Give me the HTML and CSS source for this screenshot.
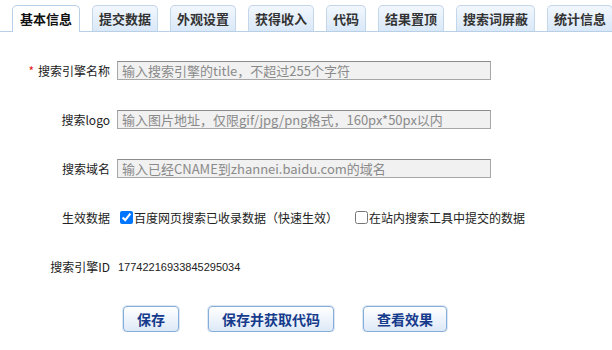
FILE: index.html
```html
<!DOCTYPE html>
<html lang="zh-CN">
<head>
    <meta charset="UTF-8">
    <title>站内搜索设置</title>
    <link rel="stylesheet" href="styles.css">
</head>
<body>

<ul class="tabs">
    <li class="tab active">基本信息</li>
    <li class="tab">提交数据</li>
    <li class="tab">外观设置</li>
    <li class="tab">获得收入</li>
    <li class="tab">代码</li>
    <li class="tab">结果置顶</li>
    <li class="tab">搜索词屏蔽</li>
    <li class="tab">统计信息</li>
</ul>

<form class="setting-form">
    <div class="row">
        <label class="row-label"><span class="required">*</span>搜索引擎名称</label>
        <input class="text-input" type="text" placeholder="输入搜索引擎的title，不超过255个字符">
    </div>
    <div class="row">
        <label class="row-label">搜索logo</label>
        <input class="text-input" type="text" placeholder="输入图片地址，仅限gif/jpg/png格式，160px*50px以内">
    </div>
    <div class="row">
        <label class="row-label">搜索域名</label>
        <input class="text-input" type="text" placeholder="输入已经CNAME到zhannei.baidu.com的域名">
    </div>
    <div class="row">
        <label class="row-label">生效数据</label>
        <div class="checks">
            <label class="check"><input type="checkbox" checked>百度网页搜索已收录数据（快速生效）</label>
            <label class="check"><input type="checkbox">在站内搜索工具中提交的数据</label>
        </div>
    </div>
    <div class="row id-row">
        <label class="row-label">搜索引擎ID</label>
        <span class="engine-id">17742216933845295034</span>
    </div>

    <div class="buttons">
        <button type="button" class="btn">保存</button>
        <button type="button" class="btn">保存并获取代码</button>
        <button type="button" class="btn">查看效果</button>
    </div>
</form>

</body>
</html>
```

FILE: styles.css
```css
body {
    margin: 0;
    font-family: "Noto Sans CJK SC", "Liberation Sans", sans-serif;
    font-size: 12px;
    color: #222;
    background: #fff;
}

/* tab bar */
.tabs {
    display: flex;
    gap: 12px;
    list-style: none;
    margin: 5px 0 0 0;
    padding: 0 0 0 12px;
    border-bottom: 1px solid #b8cfe6;
}

.tab {
    flex-shrink: 0;
    white-space: nowrap;
    height: 25px;
    line-height: 25px;
    padding: 0 6px;
    margin-bottom: -1px;
    font-size: 13px;
    font-weight: bold;
    color: #333;
    border: 1px solid #c4d6ea;
    border-bottom: none;
    border-radius: 5px 5px 0 0;
    background: linear-gradient(#f2f7fd, #d9e8f8);
}

.tab.active {
    padding: 0 7px;
    color: #111;
    background: #fff;
    border-color: #b8cfe6;
    height: 26px;
}

/* form */
.setting-form {
    padding-top: 29px;
}

.row {
    display: flex;
    align-items: center;
    height: 19px;
    margin-bottom: 30px;
}

.row-label {
    width: 110px;
    text-align: right;
    margin-right: 7px;
    flex-shrink: 0;
}

.required {
    color: #e31b1b;
    margin-right: 4px;
}

.text-input {
    box-sizing: border-box;
    width: 374px;
    height: 19px;
    padding: 0 4px;
    border: 1px solid #a7a7a7;
    border-top-color: #8c8c8c;
    background: #f1f1f1;
    font-family: "Noto Sans CJK SC", sans-serif;
    font-size: 13px;
}

.text-input::placeholder {
    color: #8a8a8a;
}

.checks {
    display: flex;
    gap: 14px;
}

.check {
    display: flex;
    align-items: center;
}

.check input {
    width: 13px;
    height: 13px;
    margin: 0 1px 0 3px;
}

.id-row {
    margin-top: 2px;
    margin-bottom: 30px;
}

.engine-id {
    margin-left: 1px;
    font-family: "Liberation Sans", sans-serif;
    font-size: 11px;
}

.buttons {
    display: flex;
    gap: 29px;
    padding-left: 123px;
}

.btn {
    height: 26px;
    padding: 0 13px;
    font-family: "Noto Sans CJK SC", sans-serif;
    font-size: 14px;
    font-weight: bold;
    color: #173b8c;
    border: 1px solid #86acd8;
    border-radius: 4px;
    background: linear-gradient(#ffffff, #dde9f7);
    box-shadow: 0 0 0 1px #dbe7f5;
    cursor: pointer;
}
```
